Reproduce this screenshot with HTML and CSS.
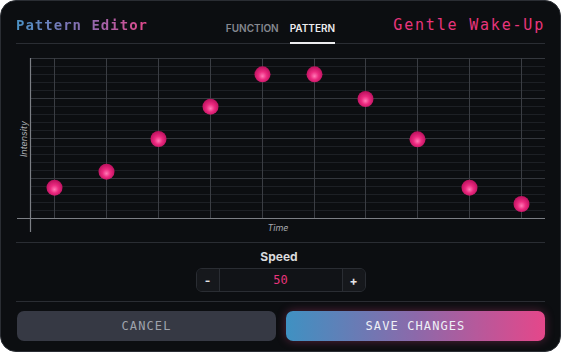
FILE: index.html
```html
<!DOCTYPE html>
<html lang="en">
<head>
  <meta charset="UTF-8">
  <title>Pattern Editor</title>
  <link rel="stylesheet" href="styles.css">
</head>
<body>
  <div class="panel">
    <div class="header">
      <div class="title">Pattern Editor</div>
      <div class="tabs">
        <div class="tab">FUNCTION</div>
        <div class="tab active">PATTERN</div>
      </div>
      <div class="name">Gentle Wake-Up</div>
    </div>

    <div class="chart">
      <svg width="529" height="198" viewBox="0 0 529 198">
        <defs>
          <radialGradient id="dot" cx="50%" cy="55%" r="55%" fx="50%" fy="62%">
            <stop offset="0%" stop-color="#ff7ab6"/>
            <stop offset="45%" stop-color="#ec2a80"/>
            <stop offset="100%" stop-color="#b80f5c"/>
          </radialGradient>
        </defs>
        <!-- minor rows -->
        <g stroke="#1d2025" stroke-width="1">
          <line x1="14" y1="22.5" x2="529" y2="22.5"/>
          <line x1="14" y1="30.5" x2="529" y2="30.5"/>
          <line x1="14" y1="38.5" x2="529" y2="38.5"/>
          <line x1="14" y1="46.5" x2="529" y2="46.5"/>
          <line x1="14" y1="62.5" x2="529" y2="62.5"/>
          <line x1="14" y1="70.5" x2="529" y2="70.5"/>
          <line x1="14" y1="78.5" x2="529" y2="78.5"/>
          <line x1="14" y1="86.5" x2="529" y2="86.5"/>
          <line x1="14" y1="102.5" x2="529" y2="102.5"/>
          <line x1="14" y1="110.5" x2="529" y2="110.5"/>
          <line x1="14" y1="118.5" x2="529" y2="118.5"/>
          <line x1="14" y1="126.5" x2="529" y2="126.5"/>
          <line x1="14" y1="142.5" x2="529" y2="142.5"/>
          <line x1="14" y1="150.5" x2="529" y2="150.5"/>
          <line x1="14" y1="158.5" x2="529" y2="158.5"/>
          <line x1="14" y1="166.5" x2="529" y2="166.5"/>
        </g>
        <!-- major rows -->
        <g stroke="#34373d" stroke-width="1">
          <line x1="14" y1="14.5" x2="529" y2="14.5"/>
          <line x1="14" y1="54.5" x2="529" y2="54.5"/>
          <line x1="14" y1="94.5" x2="529" y2="94.5"/>
          <line x1="14" y1="134.5" x2="529" y2="134.5"/>
        </g>
        <!-- columns -->
        <g stroke="#3a3d43" stroke-width="1">
          <line x1="38.5" y1="14" x2="38.5" y2="174"/>
          <line x1="90.5" y1="14" x2="90.5" y2="174"/>
          <line x1="142.5" y1="14" x2="142.5" y2="174"/>
          <line x1="194.5" y1="14" x2="194.5" y2="174"/>
          <line x1="246.5" y1="14" x2="246.5" y2="174"/>
          <line x1="298.5" y1="14" x2="298.5" y2="174"/>
          <line x1="349.5" y1="14" x2="349.5" y2="174"/>
          <line x1="401.5" y1="14" x2="401.5" y2="174"/>
          <line x1="453.5" y1="14" x2="453.5" y2="174"/>
          <line x1="505.5" y1="14" x2="505.5" y2="174"/>
        </g>
        <!-- axes -->
        <g stroke="#7c7f85" stroke-width="1.2">
          <line x1="14.5" y1="14" x2="14.5" y2="188"/>
          <line x1="1" y1="174.5" x2="529" y2="174.5"/>
        </g>
        <text class="axis-label" x="7" y="95" transform="rotate(-90 7 95)" text-anchor="middle" dominant-baseline="central">Intensity</text>
        <text class="axis-label" x="262" y="187" text-anchor="middle">Time</text>
        <!-- points -->
        <g fill="url(#dot)">
          <circle cx="38.5" cy="143.7" r="8"/>
          <circle cx="90.5" cy="127.7" r="8"/>
          <circle cx="142.5" cy="95" r="8"/>
          <circle cx="194.5" cy="62.7" r="8"/>
          <circle cx="246.5" cy="30.3" r="8"/>
          <circle cx="298.5" cy="30.3" r="8"/>
          <circle cx="349.5" cy="55" r="8"/>
          <circle cx="401.5" cy="95.3" r="8"/>
          <circle cx="453.5" cy="143.7" r="8"/>
          <circle cx="505.5" cy="160" r="8"/>
        </g>
      </svg>
    </div>

    <div class="speed">
      <div class="speed-label">Speed</div>
      <div class="stepper">
        <div class="step-btn">-</div>
        <div class="step-value">50</div>
        <div class="step-btn">+</div>
      </div>
    </div>

    <div class="footer">
      <div class="btn btn-cancel">CANCEL</div>
      <div class="btn btn-save">SAVE CHANGES</div>
    </div>
  </div>
</body>
</html>
```

FILE: styles.css
```css
*{
  padding: 0;
  margin: 0;
  box-sizing: border-box;
}
body{
  background: #ffffff;
  font-family: Inter, "Noto Sans", sans-serif;
}
.panel{
  width: 561px;
  height: 352px;
  background: #0c0e11;
  border: 1px solid #2a2d33;
  border-radius: 16px;
  padding: 0 15px;
  display: flex;
  flex-direction: column;
  overflow: hidden;
}
.header{
  height: 43px;
  padding-top: 6px;
  border-bottom: 1px solid #2a2d33;
  display: grid;
  grid-template-columns: 1fr auto 1fr;
  align-items: center;
}
.title{
  font-family: "DejaVu Sans Mono", monospace;
  font-weight: bold;
  font-size: 14px;
  letter-spacing: 1px;
  background: linear-gradient(90deg, #4b93c6 0%, #8f6ab0 55%, #e4488a 100%);
  -webkit-background-clip: text;
  background-clip: text;
  color: transparent;
  justify-self: start;
}
.tabs{
  align-self: stretch;
  display: flex;
  gap: 11px;
}
.tab{
  font-size: 10px;
  font-weight: 600;
  color: #85888f;
  padding-top: 7px;
  display: flex;
  align-items: center;
  border-bottom: 2px solid transparent;
  margin-bottom: -1px;
}
.tab.active{
  color: #ececee;
  border-bottom-color: #ececee;
}
.name{
  justify-self: end;
  font-family: "DejaVu Sans Mono", monospace;
  font-size: 15px;
  letter-spacing: 1.8px;
  margin-right: 0;
  color: #e8357c;
}
.chart{
  height: 199px;
  border-bottom: 1px solid #2a2d33;
}
.chart svg{
  display: block;
}
.axis-label{
  font-family: Inter, sans-serif;
  font-style: italic;
  font-size: 9px;
  fill: #a6a9ae;
}
.speed{
  height: 59px;
  padding-top: 7px;
  border-bottom: 1px solid #2a2d33;
  display: flex;
  flex-direction: column;
  align-items: center;
}
.speed-label{
  font-size: 12px;
  line-height: 14px;
  font-weight: 700;
  color: #d9d9dc;
  margin-bottom: 4px;
  margin-right: 3px;
}
.stepper{
  width: 170px;
  height: 24px;
  border: 1px solid #2a2d33;
  border-radius: 6px;
  background: #111317;
  display: flex;
}
.step-btn{
  width: 23px;
  display: flex;
  align-items: center;
  justify-content: center;
  font-size: 12px;
  font-weight: 700;
  color: #e4e4e6;
  background: #16181c;
}
.step-btn:first-child{
  border-right: 1px solid #2a2d33;
  border-radius: 5px 0 0 5px;
}
.step-btn:last-child{
  border-left: 1px solid #2a2d33;
  border-radius: 0 5px 5px 0;
}
.step-value{
  flex: 1;
  display: flex;
  align-items: center;
  justify-content: center;
  font-family: "DejaVu Sans Mono", monospace;
  font-size: 12px;
  color: #e8357c;
}
.footer{
  padding: 9px 0 10px 1px;
  display: flex;
  gap: 10px;
}
.btn{
  flex: 1;
  height: 30px;
  border-radius: 7px;
  display: flex;
  align-items: center;
  justify-content: center;
  font-family: "DejaVu Sans Mono", monospace;
  font-size: 12px;
  letter-spacing: 1.1px;
}
.btn-cancel{
  background: #363944;
  color: #9fa3ad;
}
.btn-save{
  background: linear-gradient(90deg, #3f91c2 0%, #8c69aa 50%, #e5478a 100%);
  color: #eef0f6;
  box-shadow: 0 0 10px rgba(229, 71, 138, 0.35);
}
```
